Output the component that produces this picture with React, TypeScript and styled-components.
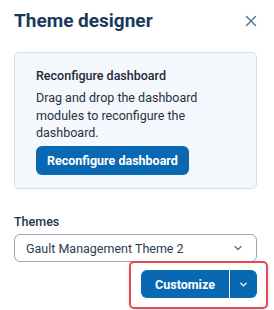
import styled, { createGlobalStyle } from 'styled-components'

const GlobalStyle = createGlobalStyle`
  html, body {
    margin: 0;
    padding: 0;
    background: #ffffff;
  }
  body {
    font-family: Roboto, "Liberation Sans", sans-serif;
    -webkit-font-smoothing: antialiased;
  }
`

const Panel = styled.div`
  width: 274px;
  height: 310px;
  box-sizing: border-box;
  padding: 9px 17px 0 14px;
  display: flex;
  flex-direction: column;
  overflow: hidden;
`

const Header = styled.div`
  display: flex;
  justify-content: space-between;
  align-items: center;
`

const Title = styled.h1`
  margin: 0;
  font-size: 19px;
  line-height: 24px;
  font-weight: 700;
  color: #173a5c;
`

const CloseButton = styled.button`
  width: 20px;
  height: 20px;
  padding: 0;
  margin-right: -4px;
  border: none;
  background: none;
  display: flex;
  align-items: center;
  justify-content: center;
  cursor: pointer;
`

const Card = styled.div`
  margin-top: 19px;
  box-sizing: border-box;
  height: 137px;
  padding: 14px 20px 0 21px;
  background: #f4f8fd;
  border: 1px solid #d6dde6;
  border-radius: 5px;
  display: flex;
  flex-direction: column;
  align-items: flex-start;
`

const CardTitle = styled.h2`
  margin: 0;
  font-size: 12.5px;
  line-height: 17px;
  font-weight: 500;
  color: #1d2a38;
`

const CardText = styled.p`
  margin: 5px 0 4px;
  font-size: 12.5px;
  line-height: 17.5px;
  color: #25313e;
`

const PrimaryButton = styled.button`
  height: 29px;
  padding: 0 11px;
  border: none;
  border-radius: 6px;
  background: #0868b2;
  color: #ffffff;
  font-family: Roboto, "Liberation Sans", sans-serif;
  font-size: 12.5px;
  font-weight: 700;
  cursor: pointer;
`

const Label = styled.label`
  margin-top: 25px;
  font-size: 12.5px;
  line-height: 16px;
  font-weight: 500;
  color: #1b3550;
`

const Select = styled.div`
  margin-top: 4px;
  height: 28px;
  box-sizing: border-box;
  padding: 0 12px 0 11px;
  border: 1px solid #9aa6b3;
  border-radius: 6px;
  display: flex;
  align-items: center;
  justify-content: space-between;
  font-size: 12.5px;
  color: #2b3c4f;
`

const Actions = styled.div`
  margin-top: 8px;
  display: flex;
  justify-content: flex-end;
`

const SplitButton = styled.div`
  position: relative;
  display: flex;
  height: 28px;

  &::after {
    content: '';
    position: absolute;
    top: -9px;
    bottom: -11px;
    left: -12px;
    right: -11px;
    border: 2px solid #e8484f;
    border-radius: 5px;
    box-shadow: 0 1px 3px rgba(0, 0, 0, 0.15);
    pointer-events: none;
  }
`

const SplitMain = styled.button`
  width: 88px;
  height: 28px;
  border: none;
  border-radius: 6px 0 0 6px;
  background: #0868b2;
  color: #ffffff;
  font-family: Roboto, "Liberation Sans", sans-serif;
  font-size: 12.5px;
  font-weight: 700;
  cursor: pointer;
`

const SplitToggle = styled.button`
  width: 27px;
  height: 28px;
  margin-left: 1px;
  padding: 0;
  border: none;
  border-radius: 0 6px 6px 0;
  background: #0868b2;
  display: flex;
  align-items: center;
  justify-content: center;
  cursor: pointer;
`

const Chevron = ({ color, size }: { color: string; size: number }) => (
  <svg width={size} height={size} viewBox="0 0 12 12" fill="none">
    <path d="M3 4.5 L6 7.5 L9 4.5" stroke={color} strokeWidth="1.4" strokeLinecap="round" strokeLinejoin="round" />
  </svg>
)

export default function App() {
  return (
    <>
      <GlobalStyle />
      <Panel>
        <Header>
          <Title>Theme designer</Title>
          <CloseButton aria-label="Close">
            <svg width="12" height="12" viewBox="0 0 12 12">
              <path d="M1.5 1.5 L10.5 10.5 M10.5 1.5 L1.5 10.5" stroke="#5a7894" strokeWidth="1.5" strokeLinecap="round" />
            </svg>
          </CloseButton>
        </Header>
        <Card>
          <CardTitle>Reconfigure dashboard</CardTitle>
          <CardText>
            Drag and drop the dashboard modules to reconfigure the dashboard.
          </CardText>
          <PrimaryButton>Reconfigure dashboard</PrimaryButton>
        </Card>
        <Label>Themes</Label>
        <Select>
          <span>Gault Management Theme 2</span>
          <Chevron color="#6b7785" size={12} />
        </Select>
        <Actions>
          <SplitButton>
            <SplitMain>Customize</SplitMain>
            <SplitToggle aria-label="More options">
              <Chevron color="#ffffff" size={11} />
            </SplitToggle>
          </SplitButton>
        </Actions>
      </Panel>
    </>
  )
}
